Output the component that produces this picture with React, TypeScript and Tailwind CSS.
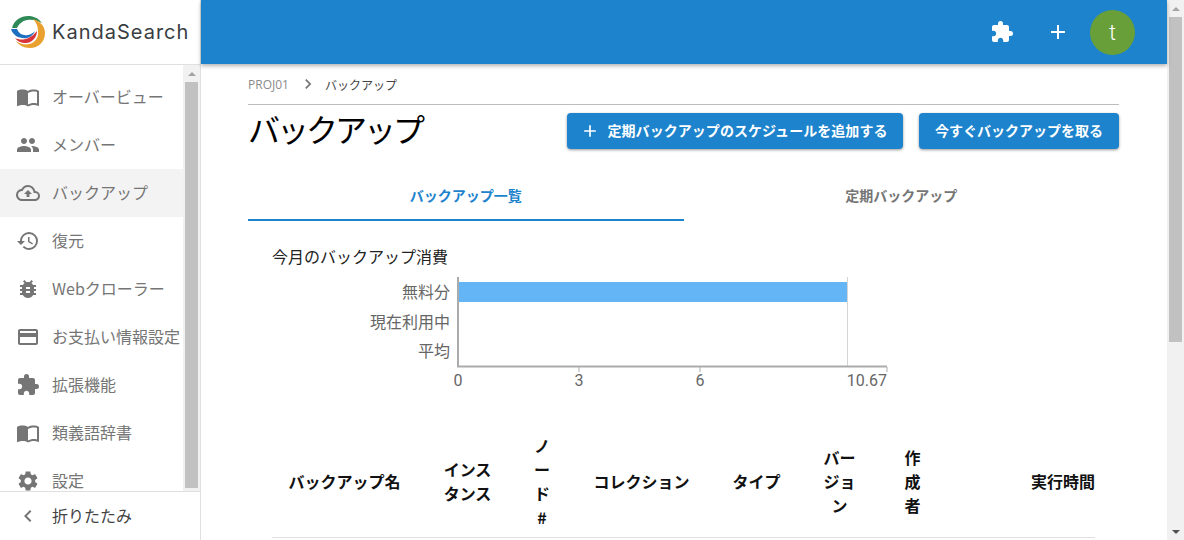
import React from "react";
import {
  MdImportContacts, MdPeople, MdOutlineCloudUpload, MdHistory, MdBugReport,
  MdCreditCard, MdExtension, MdSettings, MdChevronLeft, MdChevronRight, MdAdd,
} from "react-icons/md";

const font = { fontFamily: '"Noto Sans CJK JP", sans-serif' };

const items = [
  { icon: MdImportContacts, label: "オーバービュー" },
  { icon: MdPeople, label: "メンバー" },
  { icon: MdOutlineCloudUpload, label: "バックアップ", active: true },
  { icon: MdHistory, label: "復元" },
  { icon: MdBugReport, label: "Webクローラー" },
  { icon: MdCreditCard, label: "お支払い情報設定" },
  { icon: MdExtension, label: "拡張機能" },
  { icon: MdImportContacts, label: "類義語辞書" },
  { icon: MdSettings, label: "設定" },
];

function Logo() {
  return (
    <svg width="36" height="36" viewBox="0 0 36 36" className="shrink-0">
      <path d="M2 14 C4 6 11 2 18 2 C24 2 28 4 32 9 C27 6 22 5 17 6 C12 7 9 10 7 14 Z" fill="#2e8b57" />
      <path d="M23 5 C30 7 35 12 35 19 C35 28 28 34 20 34 C13 34 9 31 6 27 C10 30 15 31 19 30 C25 29 29 23 28 17 C28 12 26 8 23 5 Z" fill="#e9a02f" />
      <path d="M1 15 L7 15 C9 20 13 22 18 21 C21 20.5 23 19 25 17 C24 20 21 23 17 24 C10 25 3 22 1 15 Z" fill="#1f6fc0" />
      <path d="M5 24 C11 27 20 26 27 17 C27 23 22 29 16 29 C11 29 7 27 5 24 Z" fill="#d8343a" />
    </svg>
  );
}

function Scrollbar({ thumb, down = true }: { thumb: string; down?: boolean }) {
  return (
    <div className="w-[17px] shrink-0 bg-[#f1f1f1] flex flex-col items-center">
      <div className="h-[17px] flex items-center justify-center shrink-0">
        <div className="w-0 h-0 border-x-4 border-x-transparent border-b-4 border-b-[#a3a3a3]" />
      </div>
      <div className={`w-[13px] bg-[#c1c1c1] shrink-0 ${thumb}`} />
      <div className="flex-1" />
      {down && (
        <div className="h-[17px] flex items-center justify-center shrink-0">
          <div className="w-0 h-0 border-x-4 border-x-transparent border-t-4 border-t-[#505050]" />
        </div>
      )}
    </div>
  );
}

function Chart() {
  const t = { fontFamily: '"Noto Sans CJK JP", sans-serif', fontSize: 16, fill: "#666" };
  const n = { fontFamily: "Roboto, sans-serif", fontSize: 16, fill: "#666" };
  return (
    <svg width="640" height="112" viewBox="0 0 640 112" className="block">
      <rect x="186" y="5" width="389" height="20" fill="#64b5f6" />
      <line x1="575.5" y1="0" x2="575.5" y2="90" stroke="#d4d4d4" strokeWidth="1" />
      <line x1="186" y1="0" x2="186" y2="90" stroke="#ababab" strokeWidth="2" />
      <line x1="185" y1="89.5" x2="615" y2="89.5" stroke="#ababab" strokeWidth="2" />
      <line x1="307" y1="90" x2="307" y2="95" stroke="#ababab" />
      <line x1="428" y1="90" x2="428" y2="95" stroke="#ababab" />
      <line x1="615" y1="90" x2="615" y2="95" stroke="#ababab" />
      <text x="178" y="21" textAnchor="end" {...t}>無料分</text>
      <text x="178" y="51" textAnchor="end" {...t}>現在利用中</text>
      <text x="178" y="80" textAnchor="end" {...t}>平均</text>
      <text x="186" y="109" textAnchor="middle" {...n}>0</text>
      <text x="307" y="109" textAnchor="middle" {...n}>3</text>
      <text x="428" y="109" textAnchor="middle" {...n}>6</text>
      <text x="615" y="109" textAnchor="end" {...n}>10.67</text>
    </svg>
  );
}

export default function App() {
  const heads: { w: string; node: React.ReactNode; right?: boolean }[] = [
    { w: "w-[145px]", node: "バックアップ名" },
    { w: "w-[101px]", node: <>インス<br />タンス</> },
    { w: "w-[48px]", node: <>ノ<br />ー<br />ド<br />#</> },
    { w: "w-[151px]", node: "コレクション" },
    { w: "w-[79px]", node: "タイプ" },
    { w: "w-[87px]", node: <>バー<br />ジョ<br />ン</> },
    { w: "w-[59px]", node: <>作<br />成<br />者</> },
    { w: "w-[153px]", node: "実行時間", right: true },
  ];
  return (
    <div className="w-[1184px] h-[540px] overflow-hidden flex bg-white" style={font}>
      <aside className="w-[201px] shrink-0 border-r border-[#e0e0e0] flex flex-col h-full">
        <div className="h-[65px] shrink-0 border-b border-[#e0e0e0] flex items-center pl-[10px] gap-[6px]">
          <Logo />
          <span className="text-[20px] text-[#3a3d42] tracking-[1px] [font-family:Inter,sans-serif]">KandaSearch</span>
        </div>
        <div className="flex-1 flex min-h-0">
          <nav className="flex-1 pt-2 overflow-hidden">
            {items.map((it) => (
              <div key={it.label} className={`h-12 flex items-center pl-4 gap-3 ${it.active ? "bg-[#f3f3f3]" : ""}`}>
                <it.icon size={24} className="text-[#757575] shrink-0" />
                <span className="text-base text-[#757575] whitespace-nowrap -mt-[2px]">{it.label}</span>
              </div>
            ))}
          </nav>
          <Scrollbar thumb="h-[406px]" down={false} />
        </div>
        <div className="h-[49px] shrink-0 border-t border-[#e0e0e0] flex items-center pl-4 gap-3">
          <MdChevronLeft size={24} className="text-[#757575]" />
          <span className="text-base text-[#444] -mt-[2px]">折りたたみ</span>
        </div>
      </aside>

      <div className="flex-1 min-w-0 flex flex-col h-full">
        <header className="h-[64px] shrink-0 bg-[#1c83cc] shadow-[0_2px_4px_rgba(0,0,0,0.3)] flex items-center justify-end pr-[32px] relative z-10">
          <MdExtension size={24} className="text-white mr-[32px]" />
          <MdAdd size={24} className="text-white mr-5" />
          <div className="w-[45px] h-[45px] rounded-full bg-[#689f38] text-white flex items-center justify-center text-[22px] font-light [font-family:Roboto,sans-serif]">t</div>
        </header>
        <main className="flex-1 min-h-0 overflow-hidden pl-[47px] pr-[48px]">
          <div className="h-[41px] border-b border-[#bdbdbd] flex items-center text-xs pt-[2px]">
            <span className="text-[#8a8a8a] [font-family:'Open_Sans',sans-serif]">PROJ01</span>
            <MdChevronRight size={20} className="text-[#757575] ml-[9px] mr-[7px] -mt-[3px]" />
            <span className="text-[#444]">バックアップ</span>
          </div>
          <div className="h-[67px] flex items-start justify-between">
            <h1 className="text-[32px] leading-[48px] text-black tracking-[-3px] -mt-[1px]">バックアップ</h1>
            <div className="flex gap-4 mt-2">
              <button className="h-9 w-[336px] rounded bg-[#1c83cc] text-white text-sm font-bold flex items-center justify-center gap-[7px] shadow-[0_1px_3px_rgba(0,0,0,0.4)] pb-[2px] pr-[2px]">
                <MdAdd size={20} className="mt-[2px]" /><span className="tracking-[0.05px]">定期バックアップのスケジュールを追加する</span>
              </button>
              <button className="h-9 w-[200px] rounded bg-[#1c83cc] text-white text-sm font-bold shadow-[0_1px_3px_rgba(0,0,0,0.4)] pb-[2px]">今すぐバックアップを取る</button>
            </div>
          </div>
          <div className="flex h-[49px] text-sm font-bold">
            <div className="flex-1 border-b-2 border-[#1c83cc] text-[#1c83cc] flex items-center justify-center pb-[1px]">バックアップ一覧</div>
            <div className="flex-1 text-[#757575] flex items-center justify-center pb-[3px]">定期バックアップ</div>
          </div>
          <div className="pl-6 pt-6">
            <div className="text-base leading-6 text-[#222] h-[33px] -mt-[1px]">今月のバックアップ消費</div>
            <Chart />
            <table className="table-fixed w-[823px] mt-[44px] border-b border-[#e0e0e0]">
              <thead>
                <tr>
                  {heads.map((h, i) => (
                    <th key={i} className={`${h.w} text-base leading-6 font-bold text-[#111] pb-[8px] ${h.right ? "text-right" : "text-center"}`}>{h.node}</th>
                  ))}
                </tr>
              </thead>
            </table>
          </div>
        </main>
      </div>

      <Scrollbar thumb="h-[325px]" />
    </div>
  );
}
